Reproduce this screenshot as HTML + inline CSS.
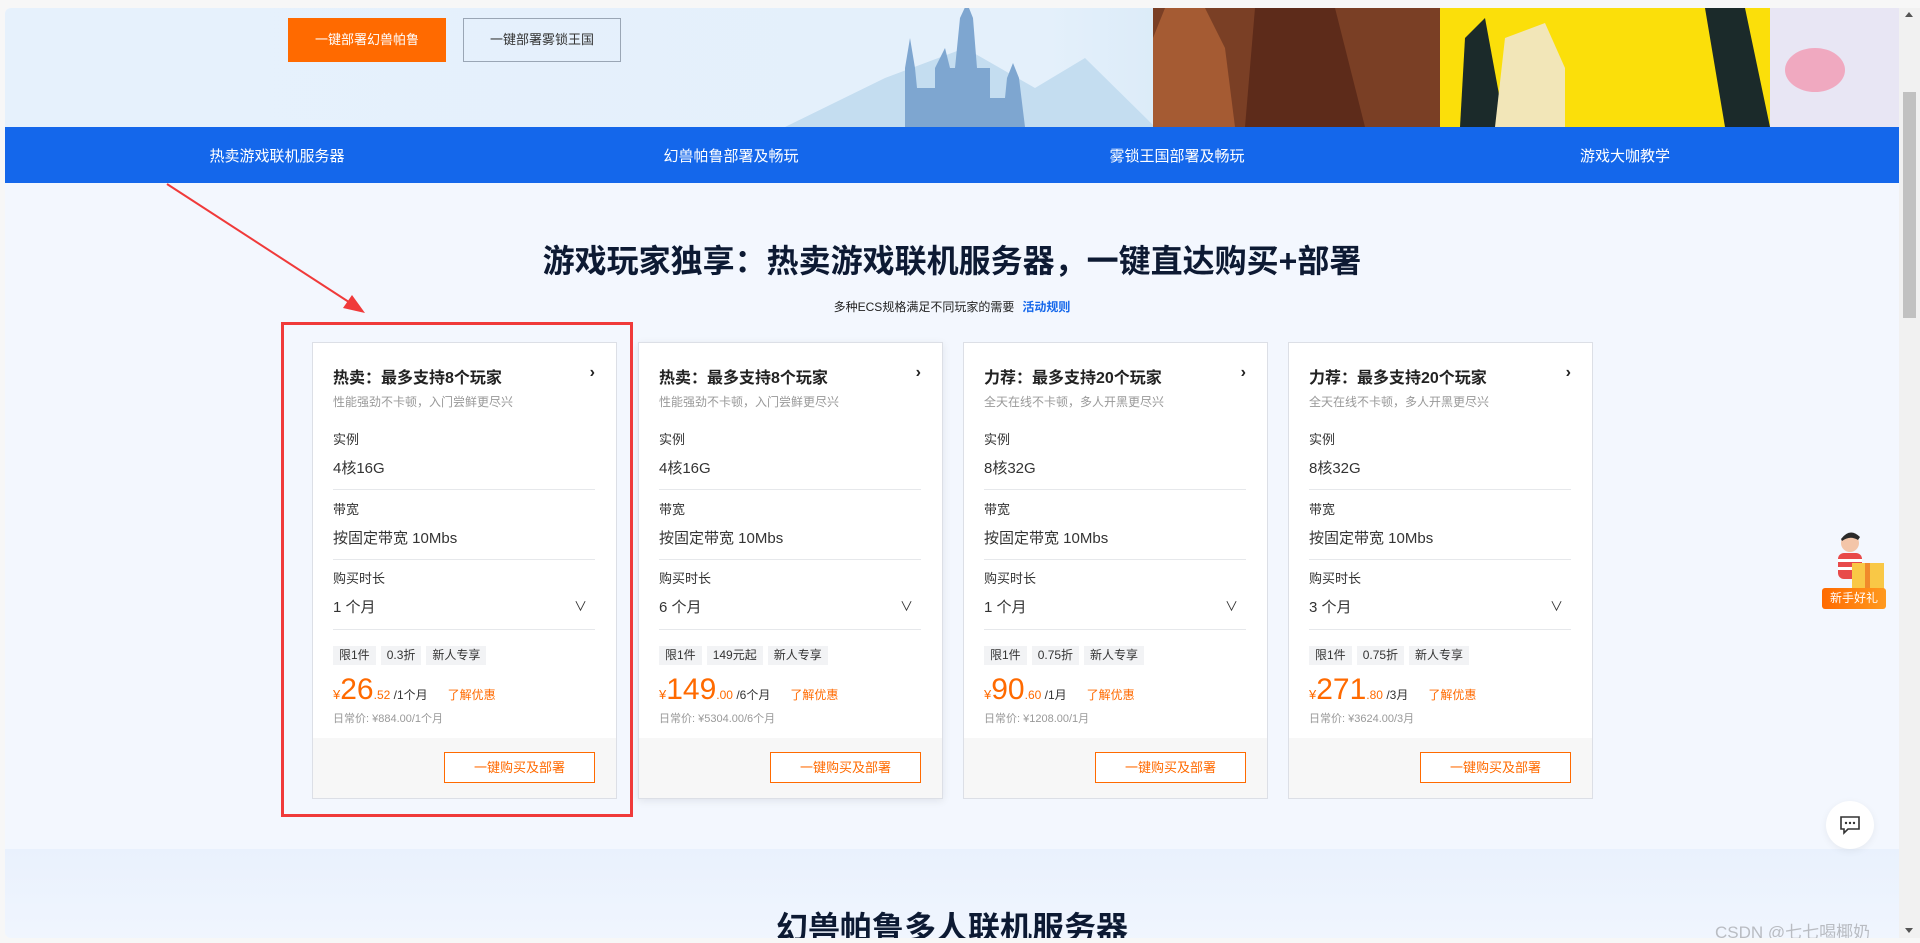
<!DOCTYPE html>
<html><head><meta charset="utf-8"><style>
*{margin:0;padding:0;box-sizing:border-box}
body{width:1920px;height:943px;overflow:hidden;background:#f7f7f7;font-family:"Liberation Sans","Noto Sans CJK SC",sans-serif;position:relative}
.frame{position:absolute;left:5px;top:8px;width:1894px;height:930px;background:#f3f7fe;overflow:hidden;border-radius:6px 0 0 6px}
.banner{position:absolute;left:0;top:0;width:1894px;height:119px;background:linear-gradient(90deg,#e6f1fc 0%,#e4f0fb 55%,#cfe4f4 70%,#a9cde8 100%);overflow:hidden}
.nav{position:absolute;left:0;top:119px;width:1894px;height:56px;background:#1467eb;color:#fff;font-size:15px}
.nav span{position:absolute;top:18px;transform:translateX(-50%);white-space:nowrap}
.btn1{position:absolute;left:283px;top:10px;width:158px;height:44px;background:#ff6a00;color:#fff;font-size:13px;text-align:center;line-height:44px}
.btn2{position:absolute;left:458px;top:10px;width:158px;height:44px;border:1px solid #9aa6b5;color:#333;font-size:13px;text-align:center;line-height:42px}
.title{position:absolute;left:0;width:1894px;text-align:center;font-size:32px;font-weight:bold;color:#0d1a33}
.sub{position:absolute;left:0;top:290px;width:1894px;text-align:center;font-size:12px;color:#222}
.sub b{color:#1467eb;margin-left:8px}
.card{position:absolute;top:334px;width:305px;height:457px;background:#fff;border:1px solid #dcdfe6}
.card.s{box-shadow:0 2px 8px rgba(0,0,0,.08)}
.card .in{position:absolute;left:20px;right:21px}
.t{font-size:16px;font-weight:bold;color:#222}
.gray{font-size:12px;color:#999}
.lab{font-size:13px;color:#333}
.val{font-size:15px;color:#333}
.line{height:1px;background:#e6e8eb}
.tag{display:inline-block;background:#f2f3f5;font-size:12px;color:#333;padding:0 6px;height:19px;line-height:19px;margin-right:5px}
.price{color:#ff6a00;white-space:nowrap}
.foot{position:absolute;left:0;bottom:0;width:303px;height:60px;background:#f7f7f7}
.buy{position:absolute;right:21px;top:14px;width:151px;height:31px;border:1px solid #ff6a00;color:#ff6a00;font-size:13px;text-align:center;line-height:29px;background:#fff}
</style></head><body>
<div class="frame">
 <div class="banner">
  <svg width="1894" height="119" style="position:absolute;left:0;top:0">
   <path d="M780 119 L880 70 L960 40 L1030 80 L1080 50 L1150 119Z" fill="#c4ddf0"/>
   <path d="M900 119 L900 60 L905 30 L910 60 L912 80 L930 80 L930 60 L940 40 L945 60 L950 60 L955 10 L962 -5 L968 10 L972 60 L985 60 L985 90 L1000 90 L1002 70 L1008 55 L1014 70 L1020 119Z" fill="#7ea6d0"/>
   <rect x="1148" y="0" width="290" height="119" fill="#7a3f25"/>
   <path d="M1148 30 L1160 0 L1200 0 L1220 40 L1230 119 L1148 119Z" fill="#a55b33"/>
   <path d="M1250 0 L1330 0 L1360 119 L1240 119Z" fill="#5d2b1a"/>
   <rect x="1435" y="0" width="330" height="119" fill="#fbdf0a"/>
   <path d="M1455 119 L1460 30 L1480 10 L1500 119Z" fill="#1b2a2a"/>
   <path d="M1490 119 L1500 30 L1540 15 L1560 60 L1560 119Z" fill="#f2e6b8"/>
   <path d="M1700 0 L1740 0 L1765 119 L1720 119Z" fill="#1b2a2a"/>
   <rect x="1765" y="0" width="129" height="119" fill="#e8e6f4"/>
   <ellipse cx="1810" cy="62" rx="30" ry="22" fill="#f0a9c0"/>
  </svg>
  <div class="btn1">一键部署幻兽帕鲁</div>
  <div class="btn2">一键部署雾锁王国</div>
 </div>
 <div class="nav"><span style="left:272px">热卖游戏联机服务器</span><span style="left:726px">幻兽帕鲁部署及畅玩</span><span style="left:1172px">雾锁王国部署及畅玩</span><span style="left:1620px">游戏大咖教学</span></div>
 <div class="title" style="top:228px">游戏玩家独享：热卖游戏联机服务器，一键直达购买+部署</div>
 <div class="sub">多种ECS规格满足不同玩家的需要<b>活动规则</b></div>

 <div class="card" style="left:307px">
  <div class="in" style="top:21px"><div class="t">热卖：最多支持8个玩家<span style="float:right">›</span></div></div>
  <div class="in gray" style="top:50px">性能强劲不卡顿，入门尝鲜更尽兴</div>
  <div class="in lab" style="top:86px">实例</div><div class="in val" style="top:114px">4核16G</div><div class="in line" style="top:146px"></div>
  <div class="in lab" style="top:156px">带宽</div><div class="in val" style="top:184px">按固定带宽 10Mbs</div><div class="in line" style="top:216px"></div>
  <div class="in lab" style="top:225px">购买时长</div><div class="in val" style="top:253px">1 个月<span style="float:right;margin-right:8px;font-size:13px">∨</span></div><div class="in line" style="top:286px"></div>
  <div class="in" style="top:303px"><span class="tag">限1件</span><span class="tag">0.3折</span><span class="tag">新人专享</span></div>
  <div class="in price" style="top:330px"><span style="font-size:13px">¥</span><span style="font-size:30px">26</span><span style="font-size:12px">.52 </span><span style="font-size:12px;color:#333">/1个月</span><span style="font-size:12px;margin-left:20px">了解优惠</span></div>
  <div class="in gray" style="top:367px;font-size:11px">日常价: ¥884.00/1个月</div>
  <div class="foot"><div class="buy">一键购买及部署</div></div>
 </div>
 <div class="card s" style="left:633px">
  <div class="in" style="top:21px"><div class="t">热卖：最多支持8个玩家<span style="float:right">›</span></div></div>
  <div class="in gray" style="top:50px">性能强劲不卡顿，入门尝鲜更尽兴</div>
  <div class="in lab" style="top:86px">实例</div><div class="in val" style="top:114px">4核16G</div><div class="in line" style="top:146px"></div>
  <div class="in lab" style="top:156px">带宽</div><div class="in val" style="top:184px">按固定带宽 10Mbs</div><div class="in line" style="top:216px"></div>
  <div class="in lab" style="top:225px">购买时长</div><div class="in val" style="top:253px">6 个月<span style="float:right;margin-right:8px;font-size:13px">∨</span></div><div class="in line" style="top:286px"></div>
  <div class="in" style="top:303px"><span class="tag">限1件</span><span class="tag">149元起</span><span class="tag">新人专享</span></div>
  <div class="in price" style="top:330px"><span style="font-size:13px">¥</span><span style="font-size:30px">149</span><span style="font-size:12px">.00 </span><span style="font-size:12px;color:#333">/6个月</span><span style="font-size:12px;margin-left:20px">了解优惠</span></div>
  <div class="in gray" style="top:367px;font-size:11px">日常价: ¥5304.00/6个月</div>
  <div class="foot"><div class="buy">一键购买及部署</div></div>
 </div>
 <div class="card" style="left:958px">
  <div class="in" style="top:21px"><div class="t">力荐：最多支持20个玩家<span style="float:right">›</span></div></div>
  <div class="in gray" style="top:50px">全天在线不卡顿，多人开黑更尽兴</div>
  <div class="in lab" style="top:86px">实例</div><div class="in val" style="top:114px">8核32G</div><div class="in line" style="top:146px"></div>
  <div class="in lab" style="top:156px">带宽</div><div class="in val" style="top:184px">按固定带宽 10Mbs</div><div class="in line" style="top:216px"></div>
  <div class="in lab" style="top:225px">购买时长</div><div class="in val" style="top:253px">1 个月<span style="float:right;margin-right:8px;font-size:13px">∨</span></div><div class="in line" style="top:286px"></div>
  <div class="in" style="top:303px"><span class="tag">限1件</span><span class="tag">0.75折</span><span class="tag">新人专享</span></div>
  <div class="in price" style="top:330px"><span style="font-size:13px">¥</span><span style="font-size:30px">90</span><span style="font-size:12px">.60 </span><span style="font-size:12px;color:#333">/1月</span><span style="font-size:12px;margin-left:20px">了解优惠</span></div>
  <div class="in gray" style="top:367px;font-size:11px">日常价: ¥1208.00/1月</div>
  <div class="foot"><div class="buy">一键购买及部署</div></div>
 </div>
 <div class="card" style="left:1283px">
  <div class="in" style="top:21px"><div class="t">力荐：最多支持20个玩家<span style="float:right">›</span></div></div>
  <div class="in gray" style="top:50px">全天在线不卡顿，多人开黑更尽兴</div>
  <div class="in lab" style="top:86px">实例</div><div class="in val" style="top:114px">8核32G</div><div class="in line" style="top:146px"></div>
  <div class="in lab" style="top:156px">带宽</div><div class="in val" style="top:184px">按固定带宽 10Mbs</div><div class="in line" style="top:216px"></div>
  <div class="in lab" style="top:225px">购买时长</div><div class="in val" style="top:253px">3 个月<span style="float:right;margin-right:8px;font-size:13px">∨</span></div><div class="in line" style="top:286px"></div>
  <div class="in" style="top:303px"><span class="tag">限1件</span><span class="tag">0.75折</span><span class="tag">新人专享</span></div>
  <div class="in price" style="top:330px"><span style="font-size:13px">¥</span><span style="font-size:30px">271</span><span style="font-size:12px">.80 </span><span style="font-size:12px;color:#333">/3月</span><span style="font-size:12px;margin-left:20px">了解优惠</span></div>
  <div class="in gray" style="top:367px;font-size:11px">日常价: ¥3624.00/3月</div>
  <div class="foot"><div class="buy">一键购买及部署</div></div>
 </div>

 <div style="position:absolute;left:0;top:841px;width:1894px;height:100px;background:linear-gradient(180deg,#e9f1fd,#f1f6fe)"></div>
 <div class="title" style="top:895px">幻兽帕鲁多人联机服务器</div>

 <div style="position:absolute;left:276px;top:314px;width:352px;height:495px;border:3px solid #f03a3a"></div>
 <svg width="1894" height="930" style="position:absolute;left:0;top:0;pointer-events:none">
  <line x1="162" y1="176" x2="350" y2="298" stroke="#f03a3a" stroke-width="2"/>
  <path d="M360 305 L338 300 L347 287Z" fill="#f03a3a"/>
 </svg>

 <svg width="64" height="60" style="position:absolute;left:1817px;top:521px">
  <circle cx="28" cy="14" r="9" fill="#f3c5a8"/><path d="M19 10 Q28 -2 38 8 L36 11 Q28 6 20 12Z" fill="#2a2a2a"/>
  <rect x="16" y="24" width="24" height="26" rx="6" fill="#e84a4a"/><rect x="16" y="30" width="24" height="3" fill="#fff"/><rect x="16" y="38" width="24" height="3" fill="#fff"/>
  <rect x="30" y="34" width="32" height="26" fill="#f9c846"/><rect x="43" y="34" width="5" height="26" fill="#f08a2a"/>
 </svg>
 <div style="position:absolute;left:1817px;top:580px;width:64px;height:21px;border-radius:3px;background:linear-gradient(90deg,#ff6a00,#ff9a1f);color:#fff;font-size:12px;text-align:center;line-height:21px">新手好礼</div>
 <div style="position:absolute;left:1821px;top:793px;width:48px;height:48px;border-radius:50%;background:#fff;box-shadow:0 2px 8px rgba(0,0,0,.06)">
  <svg width="48" height="48"><path d="M15 16 H33 V28 H22 L18 32 V28 H15Z" fill="none" stroke="#333" stroke-width="1.6"/><circle cx="20" cy="22" r="1.2" fill="#333"/><circle cx="24" cy="22" r="1.2" fill="#333"/><circle cx="28" cy="22" r="1.2" fill="#333"/></svg>
 </div>
 <div style="position:absolute;left:1710px;top:910px;font-size:17px;color:#b9bcc2;white-space:nowrap">CSDN @七七喝椰奶</div>
</div>
<div style="position:absolute;left:1899px;top:8px;width:21px;height:930px;background:#f1f1f1"></div>
<div style="position:absolute;left:1903px;top:92px;width:13px;height:226px;background:#c1c1c1"></div>
<div style="position:absolute;left:1905px;top:12px;width:0;height:0;border-left:4px solid transparent;border-right:4px solid transparent;border-bottom:5px solid #555"></div>
<div style="position:absolute;left:1905px;top:928px;width:0;height:0;border-left:4px solid transparent;border-right:4px solid transparent;border-top:5px solid #555"></div>
</body></html>
